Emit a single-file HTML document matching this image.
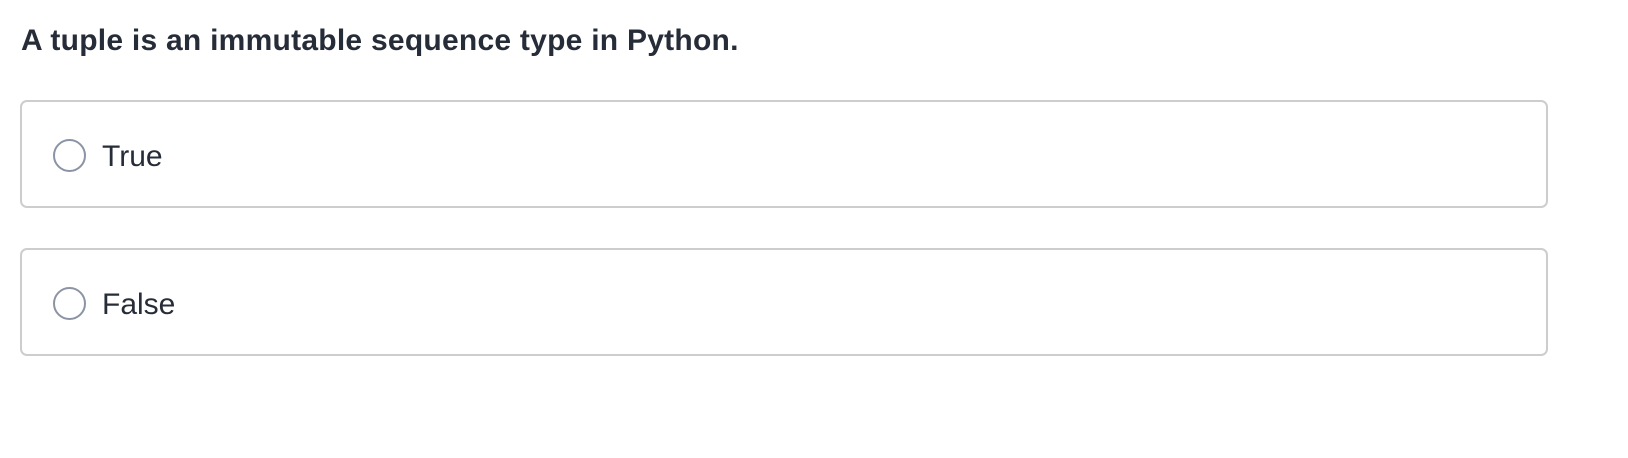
<!DOCTYPE html>
<html><head><meta charset="utf-8"><style>
html,body{margin:0;padding:0;background:#fff;width:1628px;height:458px;overflow:hidden;font-family:"Liberation Sans",sans-serif;color:#272d38}
h1{position:absolute;left:21px;top:21px;margin:0;font-size:30px;letter-spacing:0.25px;font-weight:bold;line-height:40px;white-space:nowrap}
.opt{position:absolute;left:20px;width:1528px;height:108px;border:2px solid #cdcdcd;border-radius:7px;box-sizing:border-box}
.c{position:absolute;left:31px;top:37px;width:33px;height:33px;border:2px solid #8a94a6;border-radius:50%;box-sizing:border-box}
.t{position:absolute;left:80px;top:35px;font-size:30px;line-height:40px}
</style></head><body>
<h1>A tuple is an immutable sequence type in Python.</h1>
<div class="opt" style="top:100px"><div class="c"></div><div class="t">True</div></div>
<div class="opt" style="top:248px"><div class="c"></div><div class="t">False</div></div>
</body></html>
